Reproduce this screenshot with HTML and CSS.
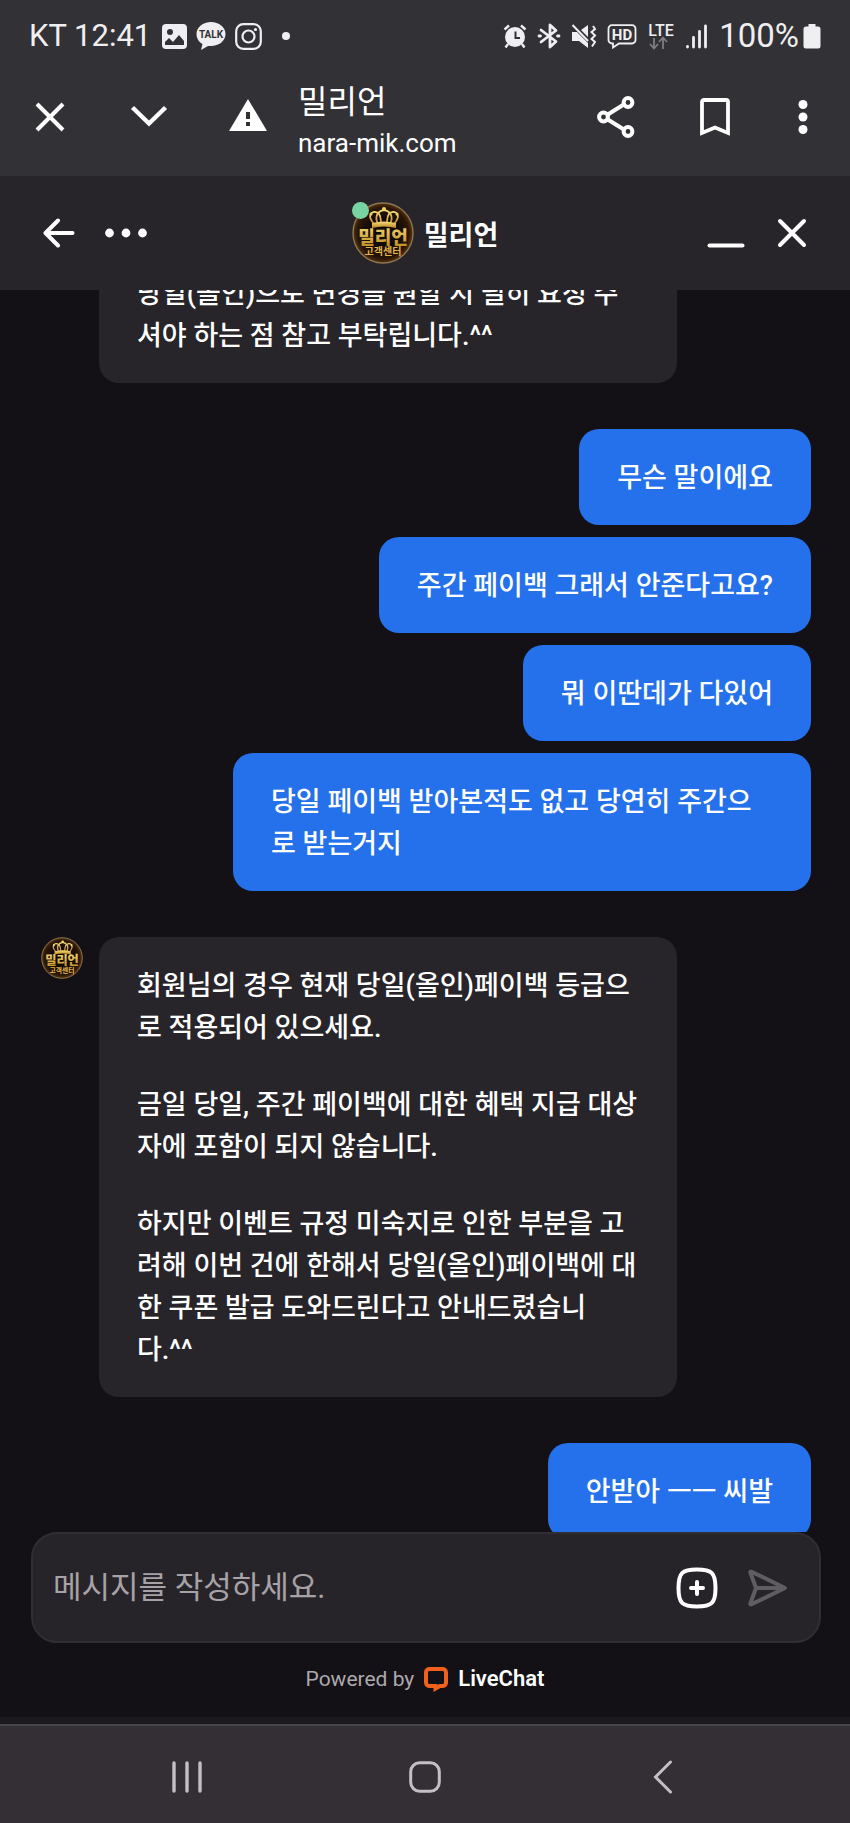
FILE: index.html
```html
<!DOCTYPE html>
<html lang="ko">
<head>
  <meta charset="UTF-8">
  <meta name="viewport" content="width=device-width, initial-scale=1">
  <title>밀리언</title>
  <link rel="stylesheet" href="styles.css">
</head>
<body>
  <!-- shared logo, used by the header and the message avatar -->
  <svg class="defs" width="0" height="0" aria-hidden="true">
    <defs>
      <linearGradient id="gold" x1="0" y1="0" x2="0" y2="1">
        <stop offset="0" stop-color="#f5dd7c"/>
        <stop offset="1" stop-color="#bd851c"/>
      </linearGradient>
      <radialGradient id="coin">
        <stop offset="0.5" stop-color="#120a05"/>
        <stop offset="0.85" stop-color="#2a1606"/>
        <stop offset="1" stop-color="#5a3410"/>
      </radialGradient>
      <symbol id="logo" viewBox="0 0 62 62">
        <circle cx="31" cy="31" r="30" fill="url(#coin)" stroke="#8a7650" stroke-width="1.4"/>
        <g fill="none" stroke="url(#gold)" stroke-width="1.8">
          <path d="M22 22 C14 13 20 8 26 11 C29 13 29 18 29 22"/>
          <path d="M42 22 C50 13 44 8 38 11 C35 13 35 18 35 22"/>
          <path d="M26 22 C22 14 26 9 32 8 C38 9 42 14 38 22"/>
        </g>
        <circle cx="32" cy="7" r="2" fill="#f0d26a"/>
        <circle cx="19" cy="12" r="1.500" fill="#f0d26a"/>
        <circle cx="45" cy="12" r="1.500" fill="#f0d26a"/>
        <path d="M20 21 Q32 18 44 21 V26 Q32 23 20 26 Z" fill="url(#gold)"/>
        <text x="31" y="42" class="logo-name">밀리언</text>
        <text x="31" y="53" class="logo-sub">고객센터</text>
      </symbol>
    </defs>
  </svg>

  <div class="app">
    <div class="top">
      <div class="status">
        <span class="status-text">KT 12:41</span>
        <svg class="st-picture" width="25" height="25" viewBox="0 0 25 25">
          <path fill-rule="evenodd" fill="#efeef1" d="M4 0H21A4 4 0 0 1 25 4V21A4 4 0 0 1 21 25H4A4 4 0 0 1 0 21V4A4 4 0 0 1 4 0ZM3 21H22V17L17 11L11 18L7 14L3 18ZM8 5A3 3 0 1 0 8 11A3 3 0 1 0 8 5Z"/>
        </svg>
        <svg class="st-talk" width="30" height="28" viewBox="0 0 30 28">
          <path fill="#efeef1" d="M15 0C23 0 29.500 5 29.500 12S23 24 15 24H12L5 28L6.500 22C3 20 .5 16.500 .5 12C.5 5 7 0 15 0Z"/>
          <text x="15" y="16" class="talk-text">TALK</text>
        </svg>
        <svg class="st-insta" width="27" height="27" viewBox="0 0 27 27" fill="none" stroke="#efeef1" stroke-width="2.2">
          <rect x="1.200" y="1.200" width="24.600" height="24.600" rx="7"/>
          <circle cx="13.500" cy="13.500" r="6"/>
          <circle cx="20.500" cy="6.500" r="1.600" fill="#efeef1" stroke="none"/>
        </svg>
        <span class="st-dot"></span>

        <div class="status-right">
          <svg width="24" height="25" viewBox="0 0 24 25">
            <circle cx="12" cy="13" r="10" fill="#efeef1"/>
            <path d="M1.500 5.500L6 1.500M22.500 5.500L18 1.500M5 20L2.500 23.500M19 20L21.500 23.500" stroke="#efeef1" stroke-width="2.400"/>
            <path d="M12.500 7.500V14H17" stroke="#323136" stroke-width="2" fill="none"/>
          </svg>
          <svg width="24" height="26" viewBox="0 0 24 26" fill="none" stroke="#efeef1" stroke-width="2.800" stroke-linecap="round" stroke-linejoin="round">
            <path d="M4 7L19 18.500L13 24V2L19 7.500L4 19"/>
            <path d="M2 13H3.500M20.500 13H22"/>
          </svg>
          <svg width="26" height="25" viewBox="0 0 26 25">
            <path d="M1 8H6L17 19V24L8 17H1ZM10 6L17 1V13Z" fill="#efeef1"/>
            <path d="M1.500 1L17 17" stroke="#efeef1" stroke-width="2"/>
            <path d="M22 2L24 5L20.500 8L24 11.500L20.500 15L24 18L21 22.500" stroke="#efeef1" stroke-width="2" fill="none"/>
          </svg>
          <svg width="30" height="25" viewBox="0 0 30 25">
            <path d="M5 1.200H25A3.500 3.500 0 0 1 28.500 5V16A3.500 3.500 0 0 1 25 19.500H12L6 23.500V19.500H5A3.500 3.500 0 0 1 1.500 16V5A3.500 3.500 0 0 1 5 1.200Z" fill="none" stroke="#efeef1" stroke-width="1.800"/>
            <text x="15" y="16" class="hd-text">HD</text>
          </svg>
          <svg class="st-lte" width="28" height="28" viewBox="0 0 28 28">
            <text x="14" y="14" class="lte-text">LTE</text>
            <path d="M7 16V26M3 22L7 26.500L11 22M16 27V16M12 20L16 15.500L20 20" stroke="#7f7e83" stroke-width="1.800" fill="none"/>
          </svg>
          <svg width="24" height="25" viewBox="0 0 24 25" stroke="#efeef1" stroke-width="2.800" stroke-linecap="round">
            <path d="M2.500 22.500V23M8.500 13.500V23M14.500 7.500V23M20.500 2V23"/>
          </svg>
          <span class="status-text battery-text">100%</span>
          <svg class="st-battery" width="18" height="25" viewBox="0 0 18 25">
            <path fill="#efeef1" d="M5.500 0H12.500V2.500H15A2.500 2.500 0 0 1 17.500 5V22A2.500 2.500 0 0 1 15 24.500H3A2.500 2.500 0 0 1 .5 22V5A2.500 2.500 0 0 1 3 2.500H5.500Z"/>
          </svg>
        </div>
      </div>

      <div class="toolbar">
        <button class="tool" aria-label="닫기">
          <svg width="32" height="32" viewBox="0 0 32 32"><path d="M3 3L29 29M29 3L3 29" stroke="#fff" stroke-width="4"/></svg>
        </button>
        <button class="tool" aria-label="접기">
          <svg width="38" height="24" viewBox="0 0 38 24"><path d="M2.500 2.500L19 18.500L35.500 2.500" stroke="#fff" stroke-width="4.400" fill="none"/></svg>
        </button>
        <button class="tool" aria-label="보안 경고">
          <svg width="38" height="36" viewBox="0 0 38 36"><path fill="#fff" fill-rule="evenodd" d="M19 0L38 32H0ZM17 13V20H21V13ZM17 23V27H21V23Z"/></svg>
        </button>
        <div class="page">
          <div class="page-title">밀리언</div>
          <div class="page-url">nara-mik.com</div>
        </div>
        <button class="tool" aria-label="공유">
          <svg width="40" height="42" viewBox="0 0 40 42" fill="none" stroke="#fff" stroke-width="4">
            <path d="M11 19L27 9M11 23L27 33"/>
            <circle cx="7.500" cy="21" r="4.400"/><circle cx="32" cy="6.500" r="4.400"/><circle cx="32" cy="35.500" r="4.400"/>
          </svg>
        </button>
        <button class="tool" aria-label="북마크">
          <svg width="30" height="38" viewBox="0 0 30 38"><path d="M2 35V4Q2 2 4 2H26Q28 2 28 4V35L15 29.500Z" fill="none" stroke="#fff" stroke-width="3.800"/></svg>
        </button>
        <button class="tool tool-more" aria-label="더보기">
          <svg width="10" height="34" viewBox="0 0 10 34" fill="#fff"><circle cx="5" cy="4.500" r="4.500"/><circle cx="5" cy="17" r="4.500"/><circle cx="5" cy="29.500" r="4.500"/></svg>
        </button>
      </div>
    </div>

    <header class="chat-header">
      <div class="header-side">
        <button class="plain" aria-label="뒤로">
          <svg width="32" height="30" viewBox="0 0 32 30" fill="none" stroke="#fff" stroke-width="4" stroke-linecap="round" stroke-linejoin="round"><path d="M29.500 15H3M15 2.500L2.500 15L15 27.500"/></svg>
        </button>
        <button class="plain" aria-label="메뉴">
          <svg width="42" height="10" viewBox="0 0 42 10" fill="#fff"><circle cx="4.500" cy="5" r="4.400"/><circle cx="21" cy="5" r="4.400"/><circle cx="37.500" cy="5" r="4.400"/></svg>
        </button>
      </div>
      <div class="agent">
        <span class="agent-avatar">
          <svg width="62" height="62"><use href="#logo"/></svg>
          <span class="online"></span>
        </span>
        <h1 class="agent-name">밀리언</h1>
      </div>
      <div class="header-side header-right">
        <button class="plain" aria-label="최소화">
          <svg width="38" height="30" viewBox="0 0 38 30"><path d="M2.500 27.500H35.500" stroke="#fff" stroke-width="4" stroke-linecap="round"/></svg>
        </button>
        <button class="plain" aria-label="채팅 닫기">
          <svg width="30" height="30" viewBox="0 0 30 30"><path d="M3 3L27 27M27 3L3 27" stroke="#fff" stroke-width="4" stroke-linecap="round"/></svg>
        </button>
      </div>
    </header>

    <main class="messages">
      <div class="message-list">
        <div class="group bot">
          <div class="avatar-slot"></div>
          <div class="bubble">
            <p>당일(올인)으로 변경을 원할 시 필히 요청 주셔야 하는 점 참고 부탁립니다.^^</p>
          </div>
        </div>

        <div class="group user">
          <div class="bubble">무슨 말이에요</div>
          <div class="bubble">주간 페이백 그래서 안준다고요?</div>
          <div class="bubble">뭐 이딴데가 다있어</div>
          <div class="bubble">당일 페이백 받아본적도 없고 당연히 주간으로 받는거지</div>
        </div>

        <div class="group bot">
          <div class="avatar-slot">
            <svg width="42" height="42"><use href="#logo"/></svg>
          </div>
          <div class="bubble">
            <p>회원님의 경우 현재 당일(올인)페이백 등급으로 적용되어 있으세요.</p>
            <p>금일 당일, 주간 페이백에 대한 혜택 지급 대상자에 포함이 되지 않습니다.</p>
            <p>하지만 이벤트 규정 미숙지로 인한 부분을 고려해 이번 건에 한해서 당일(올인)페이백에 대한 쿠폰 발급 도와드린다고 안내드렸습니다.^^</p>
          </div>
        </div>

        <div class="group user">
          <div class="bubble">안받아 ㅡㅡ 씨발</div>
        </div>
      </div>
    </main>

    <form class="composer" onsubmit="event.preventDefault()">
      <input type="text" class="composer-input" placeholder="메시지를 작성하세요." aria-label="메시지">
      <button type="button" class="plain" aria-label="첨부">
        <svg width="42" height="42" viewBox="0 0 42 42" fill="none" stroke="#fff" stroke-width="4" stroke-linecap="round">
          <path d="M21 2.500C36 2.500 39.500 6 39.500 21S36 39.500 21 39.500S2.500 36 2.500 21S6 2.500 21 2.500Z"/>
          <path d="M21 15V27M15 21H27"/>
        </svg>
      </button>
      <button type="submit" class="plain" aria-label="보내기">
        <svg width="40" height="38" viewBox="0 0 40 38" fill="none" stroke="#5f5d61" stroke-width="4" stroke-linejoin="round" stroke-linecap="round">
          <path d="M3 2.500L37 19L3 35.500Q2 35.500 2.500 34L8 19L2.500 4Q2 2.500 3 2.500ZM8 19H36"/>
        </svg>
      </button>
    </form>

    <footer class="powered">
      <span>Powered by</span>
      <svg width="24" height="26" viewBox="0 0 24 26"><path d="M6 3H18A3.500 3.500 0 0 1 22 6.500V16.500A3.500 3.500 0 0 1 18 20H16L11.500 22.500V20H6A3.500 3.500 0 0 1 2 16.500V6.500A3.500 3.500 0 0 1 6 3Z" fill="none" stroke="#f2611c" stroke-width="4"/></svg>
      <a href="#" class="brand">LiveChat</a>
    </footer>

    <nav class="sysnav">
      <button class="sys" aria-label="최근 앱">
        <svg width="32" height="32" viewBox="0 0 32 32"><path d="M3 2V30M16 2V30M29 2V30" stroke="#c3c0c5" stroke-width="3.400" stroke-linecap="round"/></svg>
      </button>
      <button class="sys" aria-label="홈">
        <svg width="32" height="32" viewBox="0 0 32 32"><rect x="1.700" y="1.700" width="28.600" height="28.600" rx="9" fill="none" stroke="#c3c0c5" stroke-width="3"/></svg>
      </button>
      <button class="sys" aria-label="이전">
        <svg width="20" height="34" viewBox="0 0 20 34"><path d="M17.500 2L2.500 17L17.500 32" fill="none" stroke="#c3c0c5" stroke-width="3" stroke-linecap="round"/></svg>
      </button>
    </nav>
  </div>
</body>
</html>
```
FILE: styles.css
```css
* { box-sizing: border-box; }
body {
  margin: 0;
  background-color: #131116;
  color: #fff;
  font-family: Roboto, 'Noto Sans CJK KR', sans-serif;
}
svg { display: block; }
.defs { position: absolute; }
button {
  display: flex;
  align-items: center;
  justify-content: center;
  padding: 0;
  border: none;
  background: none;
  cursor: pointer;
}
.app {
  display: flex;
  flex-direction: column;
  height: 100vh;
}

/* phone status bar + browser toolbar */
.top {
  flex: none;
  padding-bottom: 14px;
  background-color: #323136;
}
.status {
  display: flex;
  align-items: center;
  height: 72px;
  padding: 0 29px;
}
.status-text {
  font-size: 31px;
  line-height: 40px;
  color: #efeef1;
}
.battery-text { font-size: 33px; }
.st-picture { margin-left: 11px; }
.st-talk { margin-left: 9px; }
.st-insta { margin-left: 9px; }
.st-lte { overflow: visible; }
.st-dot {
  width: 8px;
  height: 8px;
  margin-left: 20px;
  border-radius: 50%;
  background-color: #efeef1;
}
.status-right {
  display: flex;
  align-items: center;
  gap: 10px;
  margin-left: auto;
}
.st-battery { margin-left: -6px; }
.talk-text {
  font: 700 10px Roboto, sans-serif;
  text-anchor: middle;
  fill: #323136;
}
.hd-text {
  font: 700 15px Roboto, sans-serif;
  text-anchor: middle;
  fill: #efeef1;
}
.lte-text {
  font: 500 16px Roboto, sans-serif;
  text-anchor: middle;
  fill: #efeef1;
}
.toolbar {
  display: flex;
  align-items: center;
  height: 90px;
  padding-right: 8px;
}
.tool {
  flex: none;
  width: 99px;
  height: 90px;
}
.tool-more { width: 78px; }
.page {
  flex: 1;
  min-width: 0;
  display: flex;
  flex-direction: column;
  gap: 2px;
  padding: 8px 0 0 1px;
}
.page-title {
  font-size: 32px;
  line-height: 42px;
}
.page-url {
  font-size: 26px;
  line-height: 36px;
}

/* chat header */
.chat-header {
  flex: none;
  display: grid;
  grid-template-columns: 1fr auto 1fr;
  align-items: center;
  height: 114px;
  padding: 0 43px;
  background-color: #272529;
}
.header-side {
  display: flex;
  align-items: center;
  gap: 30px;
}
.header-right {
  gap: 32px;
  justify-content: flex-end;
}
.agent {
  display: flex;
  align-items: center;
  gap: 10px;
}
.agent-avatar { position: relative; }
.online {
  position: absolute;
  top: 0;
  left: 0;
  width: 17px;
  height: 17px;
  border-radius: 50%;
  background-color: #77d4a2;
}
.agent-name {
  margin: 0;
  padding-top: 6px;
  font-size: 27px;
  line-height: 40px;
  font-weight: 700;
}
.logo-name {
  font: 900 18px 'Noto Sans CJK KR', sans-serif;
  text-anchor: middle;
  fill: url(#gold);
}
.logo-sub {
  font: 700 10px 'Noto Sans CJK KR', sans-serif;
  text-anchor: middle;
  fill: #e0b44c;
}

/* messages, scrolled almost to the end */
.messages {
  flex: 1;
  min-height: 0;
  display: flex;
  flex-direction: column;
  justify-content: flex-end;
  overflow: hidden;
}
.message-list {
  display: flex;
  flex-direction: column;
  gap: 46px;
  margin-bottom: -7px;
  padding: 0 39px 0 41px;
}
.group { display: flex; }
.user {
  flex-direction: column;
  align-items: flex-end;
  gap: 12px;
}
.bot { gap: 16px; }
.avatar-slot {
  flex: none;
  width: 42px;
}
.bubble {
  max-width: calc(100% - 192px);
  padding: 28px 38px 26px;
  border-radius: 20px;
  font-size: 27px;
  line-height: 42px;
  font-weight: 500;
  background-color: #28252a;
}
.user .bubble { background-color: #2571eb; }
.bubble p { margin: 0; }
.bubble p + p { margin-top: 35px; }

/* message box */
.composer {
  flex: none;
  display: flex;
  align-items: center;
  gap: 30px;
  height: 111px;
  margin: 0 29px 0 31px;
  padding: 0 31px 0 20px;
  border: 2px solid #302e32;
  border-radius: 26px;
  background-color: #272429;
}
.composer-input {
  flex: 1;
  min-width: 0;
  height: 60px;
  padding: 0;
  border: none;
  outline: none;
  background: none;
  color: #fff;
  font-family: inherit;
  font-size: 31px;
}
.composer-input::placeholder {
  color: #a7a2a8;
  opacity: 1;
}
.powered {
  flex: none;
  display: flex;
  align-items: center;
  justify-content: center;
  gap: 10px;
  height: 81px;
  padding-bottom: 3px;
  font-size: 21px;
  line-height: 28px;
  color: #aca8ad;
  border-bottom: 7px solid #1b191d;
}
.brand {
  color: #fff;
  font-size: 22px;
  font-weight: 600;
  text-decoration: none;
}

/* phone navigation */
.sysnav {
  flex: none;
  display: flex;
  height: 99px;
  padding: 4px 8% 0;
  border-top: 2px solid #47444a;
  background-color: #332f34;
}
.sys { flex: 1; }
```
